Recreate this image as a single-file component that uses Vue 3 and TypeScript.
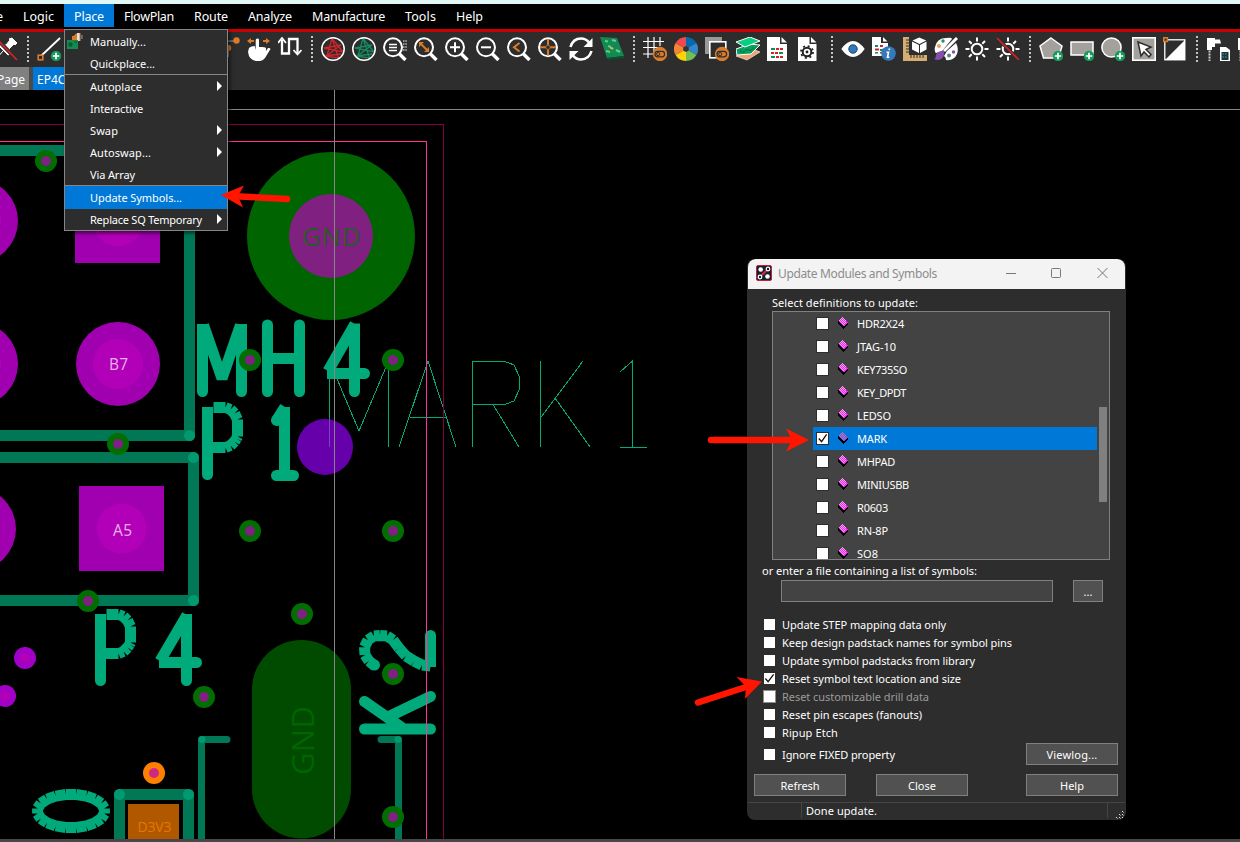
<script setup lang="ts">
import { nextTick } from 'vue'

interface MenuRow { label: string; w: number; arrow?: boolean; line?: boolean; active?: boolean }
interface TopItem { label: string; box: number; w: number }

// Spreads the letters of a label over a given width in pixels
const vFit = (el: HTMLElement, binding: { value: number }) => {
  nextTick(() => {
    const n = (el.textContent || '').length
    el.style.letterSpacing = '0px'
    const natural = el.getBoundingClientRect().width
    el.style.letterSpacing = `${((binding.value - natural) / n).toFixed(3)}px`
  })
}

const topMenu: TopItem[] = [
  { label: 'Logic', box: 51, w: 31 },
  { label: 'Place', box: 50, w: 30 },
  { label: 'FlowPlan', box: 70, w: 50 },
  { label: 'Route', box: 54, w: 34 },
  { label: 'Analyze', box: 64, w: 44 },
  { label: 'Manufacture', box: 93, w: 73 },
  { label: 'Tools', box: 51, w: 31 },
  { label: 'Help', box: 47, w: 27 },
]

const placeMenu: MenuRow[] = [
  { label: 'Manually...', w: 56 },
  { label: 'Quickplace...', w: 65, line: true },
  { label: 'Autoplace', w: 52, arrow: true },
  { label: 'Interactive', w: 53 },
  { label: 'Swap', w: 28, arrow: true },
  { label: 'Autoswap...', w: 61, arrow: true },
  { label: 'Via Array', w: 45, line: true },
  { label: 'Update Symbols...', w: 92, active: true },
  { label: 'Replace SQ Temporary', w: 112, arrow: true },
]

const symbols = [
  { name: 'HDR2X24', w: 47 }, { name: 'JTAG-10', w: 39 }, { name: 'KEY735SO', w: 50 },
  { name: 'KEY_DPDT', w: 49 }, { name: 'LEDSO', w: 34 }, { name: 'MARK', w: 30 },
  { name: 'MHPAD', w: 38 }, { name: 'MINIUSBB', w: 52 }, { name: 'R0603', w: 31 },
  { name: 'RN-8P', w: 31 }, { name: 'SO8', w: 21 },
]

const options = [
  { label: 'Update STEP mapping data only', w: 164 },
  { label: 'Keep design padstack names for symbol pins', w: 230 },
  { label: 'Update symbol padstacks from library', w: 193 },
  { label: 'Reset symbol text location and size', w: 179, on: true },
  { label: 'Reset customizable drill data', w: 147, off: true },
  { label: 'Reset pin escapes (fanouts)', w: 140 },
  { label: 'Ripup Etch', w: 56 },
]

const plus = '<circle cx="19" cy="19" r="5.2" fill="#16995c"/><path d="M19 15.8v6.4M15.8 19h6.4" stroke="#fff" stroke-width="1.7"/>'
const lens = '<circle cx="10" cy="10.3" r="9" fill="none" stroke="#fff" stroke-width="2"/><path d="M16 16.5l6.5 6.5" stroke="#fff" stroke-width="3.4"/>'
const net = (c: string) =>
  `<path d="M11 1.500L6 18.500L20 8L3 11L22 15L11 1.500L17.500 21L4 19L20 17" fill="none" stroke="${c}" stroke-width="1.300"/><circle cx="12" cy="12" r="11.2" fill="none" stroke="#fff" stroke-width="1.5"/>`
const toggle = '<circle cx="17" cy="17" r="7.2" fill="#d97c2b"/><rect x="12" y="14.3" width="9.6" height="5.6" rx="2.8" fill="none" stroke="#2d2d2d" stroke-width="1.2"/><circle cx="15.2" cy="17.1" r="1.6" fill="none" stroke="#2d2d2d"/>'
const sheet = '<path d="M1 0h13v7h7v17H1z" fill="#fff"/><path d="M15.500 0v5.500H21z" fill="#fff"/>'
const cells = '<path d="M5 11h4v2H5zM13 15h4v2h-4zM5 19h4v2H5z" fill="#138c50"/><path d="M10 11h3v2h-3zM14 11h3v2h-3zM5 15h3v2H5zM9 15h3v2H9zM10 19h3v2h-3zM14 19h3v2h-3z" fill="#d2232a"/>'
const rays = '<circle cx="12" cy="12" r="5.300" fill="none" stroke="#fff" stroke-width="2"/><path d="M12 .5v4M12 19.500v4M.5 12h4M19.500 12h4M4 4l2.700 2.700M17.300 17.300L20 20M4 20l2.700-2.700M17.300 6.700L20 4" stroke="#fff" stroke-width="2"/>'
const drill = '<path d="M1 1h8v1.500h5l1 4H9V10H6v3H1z" fill="#fff"/><path d="M3.500 13.500V24" stroke="#ccc" stroke-width="2" stroke-dasharray="2 1"/>'

const icons: Record<string, string> = {
  pin: '<path d="M18 1l5 5-2 2-1-1-5 5 1 5-2 1-9-9 2-1 5 0 4-5-1-1zM9 14l-6 7" fill="#fff" stroke="#fff"/><path d="M2 1l21 22" stroke="#2d2d2d" stroke-width="4"/><path d="M2 1l21 22" stroke="#d2232a" stroke-width="1.800"/>',
  line: '<path d="M4 19L23 1" stroke="#fff" stroke-width="1.800"/><rect x="1.200" y="18.200" width="4.600" height="4.600" fill="#2d2d2d" stroke="#d97c2b" stroke-width="1.600"/>' + plus,
  route: '<path d="M11 4h10" stroke="#aaa"/><path d="M12 10v10" stroke="#888" stroke-width="2"/><circle cx="20.500" cy="3.500" r="3.200" fill="#d97c2b"/><circle cx="12" cy="11" r="3.200" fill="#d97c2b"/>',
  hand: '<path d="M8.700 13V3q0-1.500 1.700-1.500T12 3v7q6-.5 7 1v3l2-3q2-.5 2.500 1l-5.500 9q-3 4-9 3-7-1-8-9l1-4q2-2 5.700-2z" fill="#fff"/><path d="M0 4l4-3v2h3v2H4v2zM23 4l-4-3v2h-3v2h3v2z" fill="#d97c2b"/>',
  arrows: '<path d="M4 3v13.500h7V2h8.500v14" fill="none" stroke="#fff" stroke-width="2.300"/><path d="M0 6L4 1L8 6M15.500 13l4 4.500L23.500 13" fill="none" stroke="#fff" stroke-width="1.800"/>',
  netR: net('#d2232a'), netG: net('#138c5f'),
  zList: lens + '<path d="M6 7.500h8M6 10.500h8M6 13.500h8" stroke="#fff" stroke-width="1.500"/><path d="M20 4h4M20 7h4M20 10h4M20 13h4" stroke="#fff" stroke-dasharray="1.500 .8"/>',
  zFit: lens + '<path d="M7 7l6 6" stroke="#d97c2b" stroke-width="1.800"/><path d="M5 5h5l-5 5zM15 15h-5l5-5z" fill="#d97c2b"/>',
  zIn: lens + '<path d="M10 5.300v10M5 10.300h10" stroke="#fff" stroke-width="2"/>',
  zOut: lens + '<path d="M5 10.300h10" stroke="#fff" stroke-width="2"/>',
  zPrev: lens + '<path d="M12.500 6L7 10.200l5.500 4.300" fill="none" stroke="#d97c2b" stroke-width="2"/>',
  zCenter: lens + '<path d="M10 2v6M10 12.500v6M2 10.300h6M12 10.300h6" stroke="#d97c2b" stroke-width="2"/><circle cx="10" cy="10.300" r="2.200" fill="none" stroke="#a76a35"/>',
  refresh: '<path d="M1.500 10Q4 1.500 12 1.500q5 0 8 4M22.500 14Q20 22.500 12 22.500q-5 0-8-4" fill="none" stroke="#fff" stroke-width="2.600"/><path d="M23.500 1v9h-9zM.5 23v-9h9z" fill="#fff"/>',
  board: '<path d="M0 0l17 1 7 18-17 2z" fill="#138a50"/><path d="M7 21l17-2v2L8 23z" fill="#0a5130"/><path d="M5 4l3 .5M6 14l4 1M12 3l4 1M16 13l4 2M8 9l3 1" stroke="#67c7a0" stroke-width="2"/><path d="M10 10l3 .5.5 2-3-.5z" fill="#e5c13a"/><path d="M14 8l3 1-1 2z" fill="#2d63a5"/>',
  grid: '<path d="M0 4.500h21M0 10.500h18M0 17h10M5 0v21M11 0v16M17 0v9" stroke="#fff" stroke-width="1.200"/>' + toggle,
  wheel: '<g transform="translate(12 12)"><path d="M0 0V-12A12 12 0 0 1 10.400-6z" fill="#0868ad"/><path d="M0 0L10.400-6A12 12 0 0 1 10.400 6z" fill="#3587c9"/><path d="M0 0L10.400 6A12 12 0 0 1 0 12z" fill="#71bf55"/><path d="M0 0V12A12 12 0 0 1-10.400 6z" fill="#ffd20a"/><path d="M0 0L-10.400 6A12 12 0 0 1-10.400-6z" fill="#f58532"/><path d="M0 0L-10.400-6A12 12 0 0 1 0-12z" fill="#ed4950"/><circle r="2.800" fill="#333"/></g>',
  layers: '<rect width="17" height="17" fill="#999"/><rect x="4.800" y="4.800" width="16" height="16" fill="#2d2d2d" stroke="#fff" stroke-width="1.600"/>' + toggle,
  stack: '<path d="M0 19l14-8 10 4-13 8z" fill="#f0a36c" stroke="#fff" stroke-width=".6"/><path d="M0 12l14-5 10 1-9 9-14 1z" fill="#07a064" stroke="#fff" stroke-width="1"/><path d="M4 14l4 1 3-3 3 2 4-4" fill="none" stroke="#073" stroke-width="1.500" stroke-dasharray="2 1"/><path d="M0 5l14-5 10 4-15 6z" fill="#08cf80" stroke="#fff" stroke-width="1"/>',
  doc: '<g transform="translate(-1 0)">' + sheet + cells + '</g>',
  docGear: '<g transform="translate(-1.500 0)"><path d="M1 0h12v7h7v17H1z" fill="#fff"/><path d="M14.500 0v5.500H20z" fill="#fff"/><circle cx="10.500" cy="15" r="4.300" fill="none" stroke="#222" stroke-width="2"/><circle cx="10.500" cy="15" r="1.400" fill="#222"/><circle cx="10.500" cy="15" r="6" fill="none" stroke="#222" stroke-width="1.800" stroke-dasharray="2 2.712"/></g>',
  eye: '<path d="M.3 12Q6 4 12 4t11.700 8Q18 20 12 20T.3 12z" fill="#fff"/><circle cx="12" cy="12" r="4.200" fill="#3079bd" stroke="#1e4267" stroke-width="1"/>',
  info: '<path d="M0 0h9v6h7v13H0z" fill="#fff"/><path d="M11 0v4.500h4.500z" fill="#fff"/><path d="M3 8h3v2H3zM8 12h3v2H8zM3 15h3v1.500H3z" fill="#138c50"/><path d="M8 8h3v2H8zM3 11.500h4v2H3zM8 15h3v1.500H8z" fill="#d2232a"/><circle cx="16.500" cy="16.500" r="7.300" fill="#3579bd"/><path d="M17.500 11.500l-.3 1.500M14.500 15.300h2l-1 5h1.800" stroke="#fff" stroke-width="1.600" fill="none"/>',
  ruler: '<path d="M0 0h6v18h18v6H0z" fill="#d7ac70"/><path d="M3 3h3M3 6h3M3 9h3M3 12h3M3 15h3M8 18v3M11 18v3M14 18v3M17 18v3M20 18v3" stroke="#2d2d2d"/><path d="M9 4.500L16 8v8l-7-3.500zM17 8l6.500-3.500v8L17 16zM9.500 3.500L16.200.5l7 3L16.500 7z" fill="#fff"/>',
  palette: '<path d="M1 10Q3 1 12 1q6-1 6 1L8 14l-6 2q-2-2-1-6zM13 14L22 6q3 5 1 11-3 7-11 6 0-3-2-4z" fill="#fff"/><path d="M23 1L10 14" stroke="#fff" stroke-width="3"/><path d="M10 14q1 6-3 8-3 2-7 0 2-1 2-4 1-4 8-4z" fill="#864eac"/><circle cx="9" cy="4" r="1.700" fill="#16995c"/><circle cx="5" cy="9" r="2" fill="#dba762"/><circle cx="19.500" cy="15" r="1.700" fill="#864eac"/><circle cx="15" cy="18.500" r="2" fill="#548780"/>',
  sun: rays,
  sunOff: rays + '<path d="M1 1l22 22" stroke="#2d2d2d" stroke-width="3.400"/><path d="M1 1l22 22" stroke="#d2232a" stroke-width="1.600"/>',
  penta: '<path d="M12 1l11 8-3.500 12h-15L1 9z" fill="#a4a09c" stroke="#fff" stroke-width="1.500"/>' + plus,
  rect: '<path d="M1 5h22v13H1z" fill="#a4a09c" stroke="#fff" stroke-width="1.500"/>' + plus,
  circ: '<circle cx="10.500" cy="10.500" r="9.600" fill="#a4a09c" stroke="#fff" stroke-width="1.500"/>' + plus,
  select: '<rect x=".8" y=".8" width="22.400" height="22.400" fill="#a4a09c" stroke="#fff" stroke-width="1.600"/><path d="M6 5l13 5-5 2.500 5 5-2 2.500-5-5-3 4z" fill="#fff" stroke="#2d2d2d" stroke-width="1.500"/>',
  contrast: '<rect x="1.800" y="2.800" width="20" height="20" fill="#2d2d2d" stroke="#fff" stroke-width="1.300"/><path d="M22 3v20H2z" fill="#fff"/><rect x=".8" y=".8" width="3.600" height="3.600" fill="#2d2d2d" stroke="#d97c2b" stroke-width="1.600"/>',
  drill: drill + '<path d="M14 10h6l4 3v11H14z" fill="#fff"/><rect x="15.500" y="15" width="7" height="8" fill="#20353a"/><path d="M16.500 17h5M16.500 20h5" stroke="#3aa" stroke-dasharray="1.500 1"/>',
  drill2: drill,
}

const bar: string[] = [
  'pin', '|', 'line', '_', 'route', 'hand', 'arrows', '|',
  'netR', 'netG', 'zList', 'zFit', 'zIn', 'zOut', 'zPrev', 'zCenter', 'refresh', 'board', '|',
  'grid', 'wheel', 'layers', 'stack', 'doc', 'docGear', '|',
  'eye', 'info', 'ruler', 'palette', 'sun', 'sunOff', '|',
  'penta', 'rect', 'circ', 'select', 'contrast', '|', 'drill', 'drill2',
]

const vias = [
  [46, 161], [118, 444], [250, 360], [393, 360], [250, 531], [393, 531],
  [302, 614], [88, 601], [204, 697], [393, 674], [393, 817],
]
const pads = [[-24, 221], [-24, 364], [118, 364], [-26, 529]]
const joints = [[189.5, 435.5], [193.5, 457.5], [193.5, 600.5], [119.5, 794.5], [188.5, 794.5]]

// Curved silkscreen strokes are plotted as separate straight chords
const chords = (pts: number[][]) =>
  pts.slice(1).map((p, i) => `M${pts[i][0]} ${pts[i][1]}L${p[0]} ${p[1]}`).join('')
const bowl = (x: number, y: number, h: number) => chords([
  [x + 6, y], [x + 18, y], [x + 23, y + 2], [x + 27, y + 6], [x + 29, y + 10], [x + 30, y + 12],
  [x + 30, y + h - 11], [x + 29, y + h - 9], [x + 27, y + h - 6], [x + 23, y + h - 2], [x + 18, y + h], [x, y + h],
])
const ellipse = chords(Array.from({ length: 21 }, (_, i) => {
  const a = ((i + 0.5) / 20) * Math.PI * 2
  return [+(71 + 33.8 * Math.cos(a)).toFixed(1), +(811 + 16.7 * Math.sin(a)).toFixed(1)]
}))
const two = chords([
  [375, 666], [369, 661], [365, 655], [364.5, 647], [368, 640], [374, 636], [380, 635.5],
  [387, 636], [393, 640], [399, 648], [406, 656], [414, 661], [422, 665], [430.5, 666],
])
</script>

<template>
  <div class="app">
    <div class="strip"></div>
    <nav class="menubar">
      <span class="cut">e</span>
      <div v-for="m in topMenu" :key="m.label" class="top" :class="{ on: m.label === 'Place' }" :style="{ width: m.box + 'px' }">
        <span v-fit="m.w">{{ m.label }}</span>
      </div>
    </nav>
    <div class="toolbar">
      <template v-for="(b, i) in bar" :key="i">
        <span v-if="b === '|'" class="sep"></span>
        <span v-else-if="b === '_'" class="space"></span>
        <svg v-else class="ico" viewBox="0 0 24 24" v-html="icons[b]"></svg>
      </template>
    </div>
    <div class="tabs">
      <div class="tab"><span v-fit="28">Page</span></div>
      <div class="tab cur"><span>EP4CE</span></div>
    </div>

    <svg class="board" viewBox="0 90 1240 749">
      <g fill="none" stroke="#007755" stroke-width="11">
        <path d="M0 150.500H189.500V435.500M0 435.500H189.500M0 457.500H193.500V600.500M0 600.500H193.500M119.500 840V794.500H188.500V840" stroke-linecap="round" stroke-linejoin="round" />
        <path d="M201.500 840V739.500H227M381 739.500H398.500V840" stroke-width="7" stroke-linejoin="round" stroke-linecap="round" />
      </g>
      <circle v-for="(j, i) in joints" :key="'j' + i" :cx="j[0]" :cy="j[1]" r="5.5" fill="#009970" />
      <circle cx="202" cy="739.500" r="3.500" fill="#009970" />
      <circle cx="398" cy="739.500" r="3.500" fill="#009970" />

      <g fill="#a000b0">
        <circle v-for="(p, i) in pads" :key="'p' + i" :cx="p[0]" :cy="p[1]" r="42" />
        <rect x="75" y="178" width="85" height="85" />
        <rect x="79" y="486" width="85" height="85" />
      </g>
      <g fill="#b200b8">
        <circle v-for="(p, i) in pads" :key="'q' + i" :cx="p[0]" :cy="p[1]" r="25" />
        <circle cx="118" cy="221" r="25" />
        <circle cx="121.500" cy="528.500" r="25" />
      </g>
      <g class="ptext" fill="#e9b3ec">
        <text x="109" y="370" font-size="15.500" textLength="19">B7</text>
        <text x="113" y="535.500" font-size="15.500" textLength="19">A5</text>
      </g>

      <circle cx="331" cy="236" r="84" fill="#006400" />
      <circle cx="331" cy="236" r="42" fill="#802080" />
      <text class="ptext" x="302" y="246" font-size="25.500" textLength="58.500" fill="#2d582d">GND</text>
      <rect x="252" y="640" width="99" height="198.500" rx="49.500" fill="#004b00" />
      <text class="ptext" transform="translate(314 775) rotate(-90)" font-size="31" textLength="69" fill="#006400">GND</text>

      <rect x="128" y="804" width="51" height="36" fill="#b05800" />
      <text class="ptext" x="137.500" y="832" font-size="14" textLength="34" fill="#e57700">D3V3</text>

      <!-- silkscreen: straight strokes with round ends -->
      <g fill="none" stroke="#00aa7b" stroke-width="11" stroke-linecap="round" stroke-linejoin="round">
        <path d="M202.500 340V391.500M241.500 340V391.500M267.500 325V391.500M299.500 325V391.500M267.500 358.500H299.500M354.500 340V391.500M345 373.500H364.500" />
        <path d="M207.500 430V474.500M276.500 420.500L280 416M284.500 420V475.500M276.500 475.500H293.500" />
        <path d="M100.500 640V680.500M186.500 630V680.500M175 662.500H196.500" />
        <path d="M364.500 729H430.500M364.500 701.500L404 729M430.500 696.500L390 716M430.500 635.500V660" />
      </g>
      <!-- silkscreen: square ends -->
      <g fill="none" stroke="#00aa7b" stroke-width="11" stroke-linejoin="bevel">
        <path d="M202.500 345V324M203.500 325L222 378.500L240.500 325M241.500 345V324M354.500 345V323.500M355 324L328 371M327 373.500H350" />
        <path d="M207.500 440V407M284.500 425V407M285 407L276.500 420.500" />
        <path d="M100.500 645V614M186.500 635V614M187 615L160 661M159 662.500H180M430.500 650V667" />
        <path :d="bowl(207.5, 407.5, 40)" />
        <path :d="bowl(100.5, 614.5, 39)" />
        <path :d="ellipse" />
        <path :d="two" />
      </g>
      <circle cx="374.500" cy="665" r="5.500" fill="#00aa7b" />

      <g fill="none" stroke="#00aa7b" stroke-width="1" shape-rendering="crispEdges">
        <path d="M329.500 447V361L359 431L388.500 361V447M399 447L428 361L456 447M410 417.500H447" />
        <path d="M472.500 447V361.500H505L514 365L519.500 377V389L514 401L505 404.500H472.500M493 404.500L519 447" />
        <path d="M540.500 361V447M583 361L540.500 418M555 398L590 447M620 372L632.500 361V447M620 447.500H647" />
      </g>
      <circle cx="325" cy="447" r="28" fill="#6600aa" />
      <path d="M329.500 419V447" stroke="#8040cc" />

      <g fill="#006e00"><circle v-for="(v, i) in vias" :key="'v' + i" :cx="v[0]" :cy="v[1]" r="11" /></g>
      <g fill="#802080"><circle v-for="(v, i) in vias" :key="'w' + i" :cx="v[0]" :cy="v[1]" r="5" /></g>
      <circle cx="154" cy="773" r="11" fill="#ff8000" /><circle cx="154" cy="773" r="5" fill="#d02880" />
      <circle cx="25" cy="658" r="11" fill="#a000c8" /><circle cx="25" cy="658" r="5" fill="#b400b4" />
      <circle cx="5" cy="696" r="11" fill="#a000c8" /><circle cx="5" cy="696" r="5" fill="#b400b4" />

      <g fill="none" stroke-width="1" shape-rendering="crispEdges">
        <path d="M0 124.500H443.500V839" stroke="#860040" />
        <path d="M0 141.500H426.500V839" stroke="#ff3399" />
        <path d="M0 109.500H1240M334.500 90V839" stroke="#868686" />
      </g>
    </svg>
    <div class="bottom"></div>

    <div class="popup">
      <svg class="mi" viewBox="0 0 16 18"><path d="M6 5l4-4" stroke="#d97c2b" stroke-width="2" fill="none" /><path d="M5 3h5v4H5z" fill="#d97c2b" /><path d="M10 0h3v8h-3z" fill="#e9e0d0" /><path d="M13 0v8M15 2v4" stroke="#a98" /><rect y="7" width="11" height="9" fill="#138a50" /><path d="M2 10h3v3H2zM7 9h3" fill="#0a5a34" stroke="#0a5a34" /></svg>
      <div v-for="r in placeMenu" :key="r.label" class="row" :class="{ line: r.line, active: r.active }">
        <span v-fit="r.w">{{ r.label }}</span>
        <svg v-if="r.arrow" class="tri" viewBox="0 0 5 10"><path d="M0 0L5 5L0 10z" fill="#fff" /></svg>
      </div>
    </div>

    <section class="dialog">
      <header>
        <svg class="logo" viewBox="0 0 16 16"><rect x=".5" y=".5" width="15" height="15" rx="1.500" fill="#142230" stroke="#c91c38" /><path d="M3 13L13 3" stroke="#e0203c" stroke-width="2" /><circle cx="4.700" cy="4.500" r="2.300" fill="#fff" /><circle cx="11.500" cy="11.500" r="2.300" fill="#fff" /><circle cx="12" cy="4" r="1.800" fill="#142230" stroke="#fff" stroke-width="1.200" /><circle cx="4" cy="12" r="1.800" fill="#142230" stroke="#fff" stroke-width="1.200" /></svg>
        <h1><span v-fit="159">Update Modules and Symbols</span></h1>
        <svg class="win" viewBox="0 0 102 12"><path d="M0 6.500H10" stroke="#777" /><rect x="45.500" y="1.500" width="9" height="9" rx="1" fill="none" stroke="#777" /><path d="M91.500 1L101.500 11M101.500 1L91.500 11" stroke="#777" /></svg>
      </header>
      <div class="lbl"><span v-fit="146">Select definitions to update:</span></div>
      <div class="list">
        <div class="rows">
          <div v-for="s in symbols" :key="s.name" class="sym" :class="{ hot: s.name === 'MARK' }">
            <span class="box"><svg v-if="s.name === 'MARK'" viewBox="0 0 12 12"><path d="M2 6L5 9.500L10.500 1.500" fill="none" stroke="#111" stroke-width="1.400" /></svg></span>
            <svg class="chip" viewBox="0 0 10 12" shape-rendering="crispEdges">
              <path d="M0 4v3l5 5 5-5V5z" fill="#000" />
              <path d="M4 0L0 4L5.500 9.500L9.500 5.500z" :fill="s.name === 'MARK' ? '#7a54dc' : '#ff1cff'" />
              <path d="M4 .5h1M3 1.500h1M5 1.500h1M2 2.500h1M4 2.500h1M6 2.500h1M1 3.500h1M3 3.500h1M5 3.500h1M7 3.500h1M2 4.500h1M4 4.500h1M6 4.500h1M3 5.500h1M5 5.500h1M7 5.500h1M4 6.500h1M6 6.500h1M5 7.500h1" :stroke="s.name === 'MARK' ? '#a878cc' : '#e8a8e8'" />
            </svg>
            <span v-fit="s.w">{{ s.name }}</span>
          </div>
        </div>
        <div class="thumb"></div>
      </div>
      <div class="lbl two"><span v-fit="215">or enter a file containing a list of symbols:</span></div>
      <div class="file"><div class="input"></div><div class="btn dots">...</div></div>
      <div class="opts">
        <div v-for="o in options" :key="o.label" class="opt" :class="{ off: o.off }">
          <span class="box"><svg v-if="o.on" viewBox="0 0 12 12"><path d="M1.500 6L4.500 9.500L10.500 1.500" fill="none" stroke="#111" stroke-width="1.400" /></svg></span>
          <span v-fit="o.w">{{ o.label }}</span>
        </div>
      </div>
      <div class="last">
        <div class="opt"><span class="box"></span><span v-fit="113">Ignore FIXED property</span></div>
        <div class="btn"><span v-fit="51">Viewlog...</span></div>
      </div>
      <div class="btns">
        <div class="btn"><span v-fit="39">Refresh</span></div>
        <div class="btn"><span v-fit="28">Close</span></div>
        <div class="btn help"><span v-fit="24">Help</span></div>
      </div>
      <footer>
        <div class="f1"></div>
        <div class="f2"><span v-fit="71">Done update.</span></div>
        <svg class="grip" viewBox="0 0 10 10" shape-rendering="crispEdges"><path d="M7 1.500h1M4 4.500h1M7 4.500h1M1 7.500h1M4 7.500h1M7 7.500h1" stroke="#ddd" stroke-width="1" /><path d="M8 2.500h1M5 5.500h1M8 5.500h1M2 8.500h1M5 8.500h1M8 8.500h1" stroke="#888" /></svg>
      </footer>
    </section>

    <svg class="marks" viewBox="0 0 1240 842">
      <g stroke="#ff1500" stroke-width="6.500" stroke-linecap="round">
        <path d="M240 196.500L287 199" /><path d="M711 440H792" /><path d="M698 702.500L746 687" />
      </g>
      <g fill="#ff1500">
        <path d="M221 195L244 185.500L238 196L243 207.500z" />
        <path d="M809 440L786 428.500L792 440L786 451.500z" />
        <path d="M762 681.500L736.500 677L746 686.500L745 699z" />
      </g>
    </svg>
  </div>
</template>

<style>
body { background: #000; overflow: hidden; }
</style>

<style scoped>
.app { position: relative; width: 1240px; height: 842px; display: flex; flex-direction: column; background: #000; color: #fff; font: 11px/14px "Noto Sans", "Open Sans", sans-serif; overflow: hidden; white-space: nowrap; }
.app svg { display: block; flex: none; }
.strip { height: 4px; background: #e0f7f5; flex: none; }
.menubar { display: flex; height: 25px; flex: none; border-bottom: 3px solid #cc0000; font-size: 12.5px; }
.cut { width: 13px; line-height: 26px; text-indent: -4px; }
.top { height: 23px; line-height: 26px; padding-left: 10px; box-sizing: border-box; }
.top.on { background: #0078d7; }
.toolbar { display: flex; align-items: center; gap: 7px; height: 35px; box-sizing: border-box; padding-bottom: 2px; flex: none; background: #2d2d2d; margin-left: -6px; }
.ico { width: 24px; height: 24px; overflow: hidden; }
.sep { width: 5px; height: 26px; flex: none; background: repeating-linear-gradient(#c4c4c4 0 2px, transparent 2px 4px) center / 2px 100% no-repeat; }
.space { width: 141px; flex: none; }
.tabs { display: flex; gap: 4px; height: 23px; flex: none; background: linear-gradient(90deg, #4a4a4a 64px, #2d2d2d 64px); font-size: 12px; line-height: 25px; }
.tab { width: 29px; background: #808080; text-indent: -3px; }
.tab.cur { width: 60px; background: #0078d7; text-indent: 4px; overflow: hidden; }
.board { width: 1240px; height: 749px; }
.ptext { font-family: "Open Sans", "Noto Sans", sans-serif; font-weight: 400; }
.bottom { height: 3px; background: #484646; flex: none; }

.popup { position: absolute; left: 64px; top: 29px; width: 164px; height: 202px; box-sizing: border-box; border: 1px solid #868686; background: #2d2d2d; padding-top: 1px; box-shadow: 2px 2px 4px rgba(0, 0, 0, .6); }
.row { position: relative; height: 22px; line-height: 21px; padding-left: 25px; display: flex; align-items: center; justify-content: space-between; }
.row > span { margin-top: -1px; }
.row.line > span, .row.active > span { margin-top: 0; }
.row.line { border-bottom: 1px solid #868686; height: 21px; margin-bottom: 1px; line-height: 23px; }
.row.active { background: #0078d7; margin-top: -1px; height: 23px; line-height: 24px; }
.mi { position: absolute; left: 2px; top: 3px; width: 16px; height: 18px; }
.tri { width: 5px; height: 10px; margin: -2px 5px 0 0; }

.dialog { position: absolute; left: 747px; top: 259px; width: 379px; height: 561px; box-sizing: border-box; border-radius: 8px; background: #2d2d2d; display: flex; flex-direction: column; overflow: hidden; }
header { display: flex; align-items: center; height: 30px; flex: none; background: #f3f3f3; padding: 0 17px 0 8px; margin: 0 1px; border-radius: 8px 8px 0 0; box-sizing: border-box; }
.logo { width: 16px; height: 16px; margin-top: -2px; }
h1 { margin: 0 0 0 6px; font-size: 12px; font-weight: 400; color: #8c8c8c; flex: 1; line-height: 30px; }
.win { width: 102px; height: 12px; margin-top: -2px; }
.lbl { height: 22px; line-height: 28px; padding-left: 25px; flex: none; }
.lbl.two { height: 20px; line-height: 21px; padding-left: 15px; }
.list { display: flex; width: 338px; height: 249px; box-sizing: border-box; margin-left: 25px; border: 1px solid #808080; background: #434343; overflow: hidden; flex: none; }
.rows { padding-left: 40px; width: 284px; }
.sym { display: flex; align-items: center; height: 23px; padding-left: 4px; }
.sym.hot { background: #0078d7; }
.box { width: 11px; height: 11px; background: #fff; flex: none; box-shadow: 0 0 0 1px #2e2e2e; }
.chip { width: 10px; height: 12px; margin: -2px 9px 0 10px; }
.thumb { width: 8px; height: 95px; background: #808080; margin: 95px 0 0 2px; }
.file { display: flex; gap: 20px; padding-left: 34px; flex: none; }
.input { width: 272px; height: 22px; box-sizing: border-box; border: 1px solid #808080; background: #434343; }
.btn { width: 92px; height: 22px; box-sizing: border-box; border: 1px solid #808080; background: #515151; text-align: center; line-height: 21px; }
.btn.dots { width: 30px; }
.opts { padding: 14px 0 0 17px; flex: none; }
.opt { display: flex; align-items: center; gap: 7px; height: 18px; }
.opt .box { margin-top: -2px; box-shadow: none; }
.opt.off { color: #9b9b9b; }
.opt.off .box { outline: 1px solid #8c8c8c; }
.last { display: flex; justify-content: space-between; align-items: center; padding: 1px 8px 0 17px; height: 22px; flex: none; }
.last .opt { margin-top: 2px; }
.btns { display: flex; padding-left: 7px; margin-top: 9px; gap: 30px; flex: none; }
.help { margin-left: 28px; }
footer { display: flex; height: 18px; margin: 6px 1px 0; border-top: 1px solid #454545; flex: none; }
.f1 { width: 53px; height: 15px; border-right: 1px solid #454545; }
.f2 { width: 301px; height: 15px; line-height: 16px; padding-left: 4px; border-right: 1px solid #454545; }
.grip { width: 10px; height: 10px; margin: 7px 0 0 7px; }
.marks { position: absolute; left: 0; top: 0; width: 1240px; height: 842px; pointer-events: none; }
</style>
